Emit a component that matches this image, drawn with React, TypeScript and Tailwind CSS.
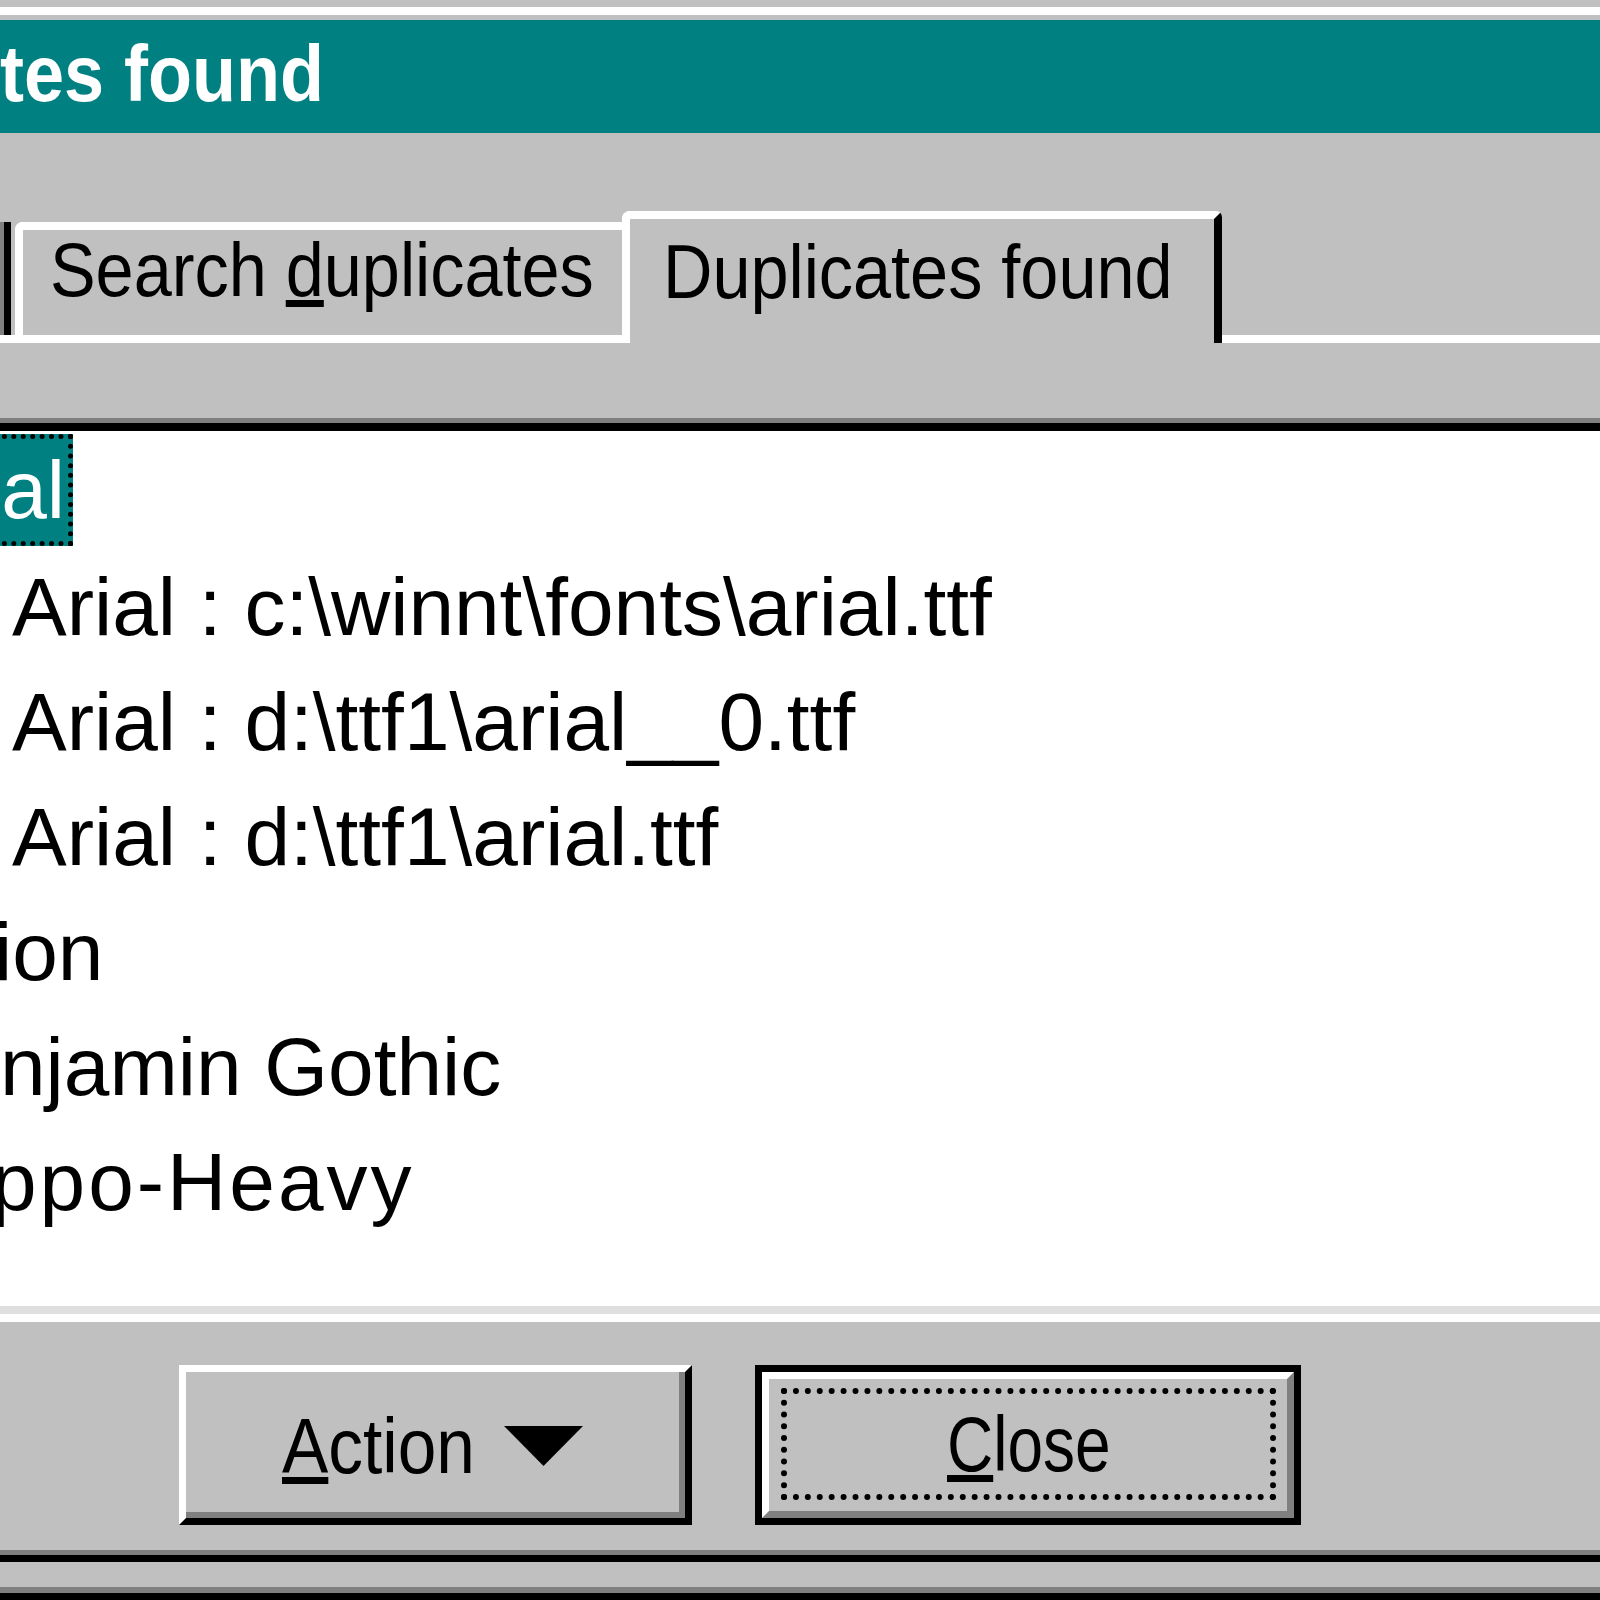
export default function App() {
  const rowCls = "h-[115px] leading-[115px] whitespace-nowrap";

  return (
    <div className="w-[1600px] h-[1600px] overflow-hidden bg-[#c0c0c0] font-['Liberation_Sans',Arial,sans-serif] text-black flex flex-col">
      {/* window frame top */}
      <div className="h-[7px] shrink-0" />
      <div className="h-[8px] shrink-0 bg-white" />
      <div className="h-[5px] shrink-0" />

      {/* title bar */}
      <div className="h-[113px] shrink-0 bg-[#008080] text-white font-bold text-[80px] leading-[80px] pt-[14px] whitespace-nowrap">
        <span className="inline-block origin-left scale-x-[0.9]">tes found</span>
      </div>

      {/* tab strip */}
      <div className="h-[210px] shrink-0 flex items-end">
        <div className="w-[15px] flex flex-col">
          <div className="h-[113px] w-[11px] bg-[#808080] border-r-[7px] border-r-black" />
          <div className="h-[8px] bg-white" />
        </div>

        <div className="w-[607px] flex flex-col">
          <div className="h-[113px] border-t-[8px] border-l-[8px] border-white rounded-tl-[8px] pl-[27px] pt-[2px] text-[76px] leading-[76px] whitespace-nowrap">
            <span className="inline-block origin-left scale-x-[0.9]">
              Search{" "}
              <span className="underline decoration-[7px] underline-offset-[4px]">d</span>
              uplicates
            </span>
          </div>
          <div className="h-[8px] bg-white" />
        </div>

        <div className="w-[600px] h-[132px] border-t-[8px] border-l-[8px] border-r-[8px] border-t-white border-l-white border-r-black rounded-tl-[8px] rounded-tr-[6px] pl-[33px] pt-[15px] text-[76px] leading-[76px] whitespace-nowrap">
          <span className="inline-block origin-left scale-x-[0.9]">Duplicates found</span>
        </div>

        <div className="flex-1 flex flex-col">
          <div className="h-[113px]" />
          <div className="h-[8px] bg-white" />
        </div>
      </div>

      <div className="h-[75px] shrink-0" />

      {/* list box */}
      <div className="h-[5px] shrink-0 bg-[#808080]" />
      <div className="h-[8px] shrink-0 bg-black" />
      <div className="h-[875px] shrink-0 bg-white pt-[3px] text-[82px] overflow-hidden">
        <div className={rowCls}>
          <span className="inline-block align-top h-[112px] w-[90px] -ml-[17px] bg-[#008080] border-[5px] border-dotted border-black text-white text-right pr-[3px] leading-[102px]">
            al
          </span>
        </div>
        <div className={`${rowCls} pl-[12px]`}>Arial : c:\winnt\fonts\arial.ttf</div>
        <div className={`${rowCls} pl-[12px]`}>Arial : d:\ttf1\arial__0.ttf</div>
        <div className={`${rowCls} pl-[12px]`}>Arial : d:\ttf1\arial.ttf</div>
        <div className={`${rowCls} -ml-[6px]`}>ion</div>
        <div className={rowCls}>njamin Gothic</div>
        <div className={`${rowCls} -ml-[9px] tracking-[3px]`}>ppo-Heavy</div>
      </div>
      <div className="h-[8px] shrink-0 bg-[#dfdfdf]" />
      <div className="h-[8px] shrink-0 bg-white" />

      {/* buttons */}
      <div className="h-[228px] shrink-0 flex items-start pt-[43px] pl-[179px] gap-[63px]">
        <div className="w-[513px] h-[160px] flex border-[7px] border-t-white border-l-white border-r-black border-b-black">
          <div className="flex-1 flex items-center justify-center gap-[29px] pt-[8px] border-r-[6px] border-b-[6px] border-[#808080] text-[78px] leading-[78px]">
            <span className="inline-block w-[193px] whitespace-nowrap">
              <span className="inline-block origin-left scale-x-[0.89]">
                <span className="underline decoration-[7px] underline-offset-[4px]">A</span>
                ction
              </span>
            </span>
            <svg width="79" height="40" viewBox="0 0 79 40" className="shrink-0">
              <polygon points="0,0 79,0 39.5,40" fill="#000" />
            </svg>
          </div>
        </div>

        <div className="w-[546px] h-[160px] flex border-[7px] border-black">
          <div className="flex-1 flex border-[7px] border-t-white border-l-white border-r-[#808080] border-b-[#808080] pt-[9px] pl-[12px] pr-[11px] pb-[11px]">
            <div className="flex-1 flex items-center justify-center border-[6px] border-dotted border-black text-[78px] leading-[78px]">
              <span className="inline-block w-[163px] whitespace-nowrap">
                <span className="inline-block origin-left scale-x-[0.82]">
                  <span className="underline decoration-[7px] underline-offset-[4px]">C</span>
                  lose
                </span>
              </span>
            </div>
          </div>
        </div>
      </div>

      {/* tab panel bottom + window frame bottom */}
      <div className="h-[5px] shrink-0 bg-[#808080]" />
      <div className="h-[7px] shrink-0 bg-black" />
      <div className="h-[25px] shrink-0" />
      <div className="h-[6px] shrink-0 bg-[#808080]" />
      <div className="h-[7px] shrink-0 bg-black" />
    </div>
  );
}
